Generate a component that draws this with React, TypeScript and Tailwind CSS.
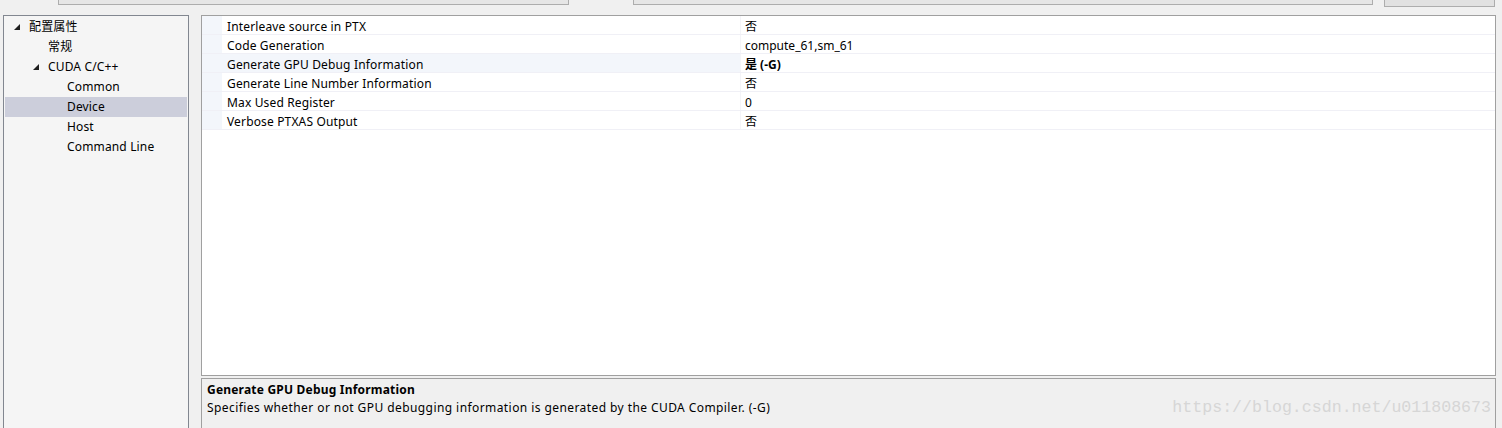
import React from "react";

const font = { fontFamily: '"Noto Sans", "Noto Sans CJK SC", sans-serif' };

type TreeItem = { label: string; indent: number; arrow?: boolean; selected?: boolean };

const tree: TreeItem[] = [
  { label: "配置属性", indent: 0, arrow: true },
  { label: "常规", indent: 1 },
  { label: "CUDA C/C++", indent: 1, arrow: true },
  { label: "Common", indent: 2 },
  { label: "Device", indent: 2, selected: true },
  { label: "Host", indent: 2 },
  { label: "Command Line", indent: 2 },
];

const props: { name: string; value: string; bold?: boolean; selected?: boolean }[] = [
  { name: "Interleave source in PTX", value: "否" },
  { name: "Code Generation", value: "compute_61,sm_61" },
  { name: "Generate GPU Debug Information", value: "是 (-G)", bold: true, selected: true },
  { name: "Generate Line Number Information", value: "否" },
  { name: "Max Used Register", value: "0" },
  { name: "Verbose PTXAS Output", value: "否" },
];

function Arrow() {
  return (
    <svg width="6" height="6" viewBox="0 0 6 6" className="shrink-0">
      <polygon points="6,0 6,6 0,6" fill="#1e1e1e" />
    </svg>
  );
}

export default function App() {
  return (
    <div className="w-[1502px] h-[428px] overflow-hidden bg-[#f0f0f0] text-[12px] text-black flex flex-col" style={font}>
      {/* top strip */}
      <div className="h-[15px] flex items-start shrink-0">
        <div className="ml-[58px] w-[511px] h-[5px] bg-[#e6e6e6] border border-t-0 border-[#adadad]" />
        <div className="ml-[64px] w-[740px] h-[5px] bg-[#e6e6e6] border border-t-0 border-[#adadad]" />
        <div className="ml-[11px] w-[111px] h-[7px] bg-[#e1e1e1] border border-t-0 border-[#adadad]" />
      </div>
      <div className="flex flex-1 min-h-0 pl-[3px]">
        {/* left tree */}
        <div className="w-[186px] h-[420px] bg-[#f5f5f5] border border-[#828790] pt-[1px] px-[1px] shrink-0">
          {tree.map((t) => (
            <div
              key={t.label}
              className={`h-[20px] flex items-center ${t.selected ? "bg-[#cccedb]" : ""}`}
            >
              <div
                className="flex items-center"
                style={{ paddingLeft: 9 + t.indent * 19 }}
              >
                <div className="w-[6px] flex items-center">{t.arrow ? <Arrow /> : null}</div>
                <span className="ml-[9px] leading-none tracking-[0.15px]">{t.label}</span>
              </div>
            </div>
          ))}
        </div>
        {/* right side */}
        <div className="ml-[12px] w-[1295px] flex flex-col shrink-0">
          <div className="h-[361px] bg-white border border-[#a0a0a0] shrink-0">
            {props.map((p) => (
              <div key={p.name} className="h-[19px] flex border-b border-[#f0f0f6]">
                <div className="w-[20px] bg-[#f3f6fb] shrink-0" />
                <div
                  className={`w-[519px] pl-[5px] pt-[3px] flex items-center shrink-0 border-r border-[#f4f4f8] tracking-[0.15px] ${p.selected ? "bg-[#f3f6fb]" : ""}`}
                >
                  {p.name}
                </div>
                <div className={`flex-1 pl-[4px] pt-[3px] flex items-center ${p.bold ? "font-bold" : ""}`}>
                  {p.value}
                </div>
              </div>
            ))}
          </div>
          <div className="mt-[2px] h-[60px] bg-[#f0f0f0] border border-[#a0a0a0] px-[5px] pt-[2px] relative shrink-0">
            <div className="font-bold leading-[18px] tracking-[0.2px]">Generate GPU Debug Information</div>
            <div className="leading-[18px] tracking-[0.42px]">
              Specifies whether or not GPU debugging information is generated by the CUDA Compiler. (-G)
            </div>
            <div
              className="absolute right-[4px] top-[21px] text-[16.6px] text-[#d6d6d6] leading-none"
              style={{ fontFamily: '"Liberation Mono", monospace' }}
            >
              https://blog.csdn.net/u011808673
            </div>
          </div>
        </div>
      </div>
    </div>
  );
}
